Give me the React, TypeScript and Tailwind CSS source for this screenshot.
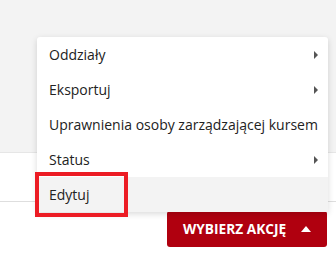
const items = [
  { label: 'Oddziały', sub: true },
  { label: 'Eksportuj', sub: true },
  { label: 'Uprawnienia osoby zarządzającej kursem', sub: false },
  { label: 'Status', sub: true },
  { label: 'Edytuj', sub: false, active: true },
]

export default function App() {
  return (
    <div className="relative w-[336px] h-[253px] overflow-hidden bg-white font-['Open_Sans',sans-serif]">
      {/* page background */}
      <div className="h-[153px] bg-[#f3f3f3] border-b border-[#e6e6e6]" />
      <div className="h-[49px] border-b border-[#dedede]" />

      {/* action button */}
      <div className="flex justify-end pr-[9px] pt-[9px]">
        <button className="flex items-center h-[36px] w-[160px] pl-[16px] gap-[15px] rounded-[3px] bg-[#b0000f] text-white text-[13.7px] font-bold whitespace-nowrap">
          WYBIERZ AKCJĘ
          <span className="w-0 h-0 border-l-[5px] border-r-[5px] border-b-[6px] border-l-transparent border-r-transparent border-b-white" />
        </button>
      </div>

      {/* dropdown menu */}
      <div className="absolute left-[37px] top-[37px] w-[291px] bg-white rounded-[3px] shadow-[0_2px_6px_rgba(0,0,0,0.15)]">
        {items.map((it) => (
          <div
            key={it.label}
            className={`flex items-center justify-between h-[35px] pl-[12px] pr-[10px] text-[14px] text-[#222] whitespace-nowrap ${it.active ? 'bg-[#f3f3f3]' : ''}`}
          >
            <span>{it.label}</span>
            {it.sub && (
              <span className="w-0 h-0 border-t-[4px] border-b-[4px] border-l-[4px] border-t-transparent border-b-transparent border-l-[#555]" />
            )}
          </div>
        ))}
      </div>

      {/* highlight box */}
      <div className="absolute left-[35px] top-[172px] w-[93px] h-[45px] border-[4px] border-[#ec1c24]" />
    </div>
  )
}
